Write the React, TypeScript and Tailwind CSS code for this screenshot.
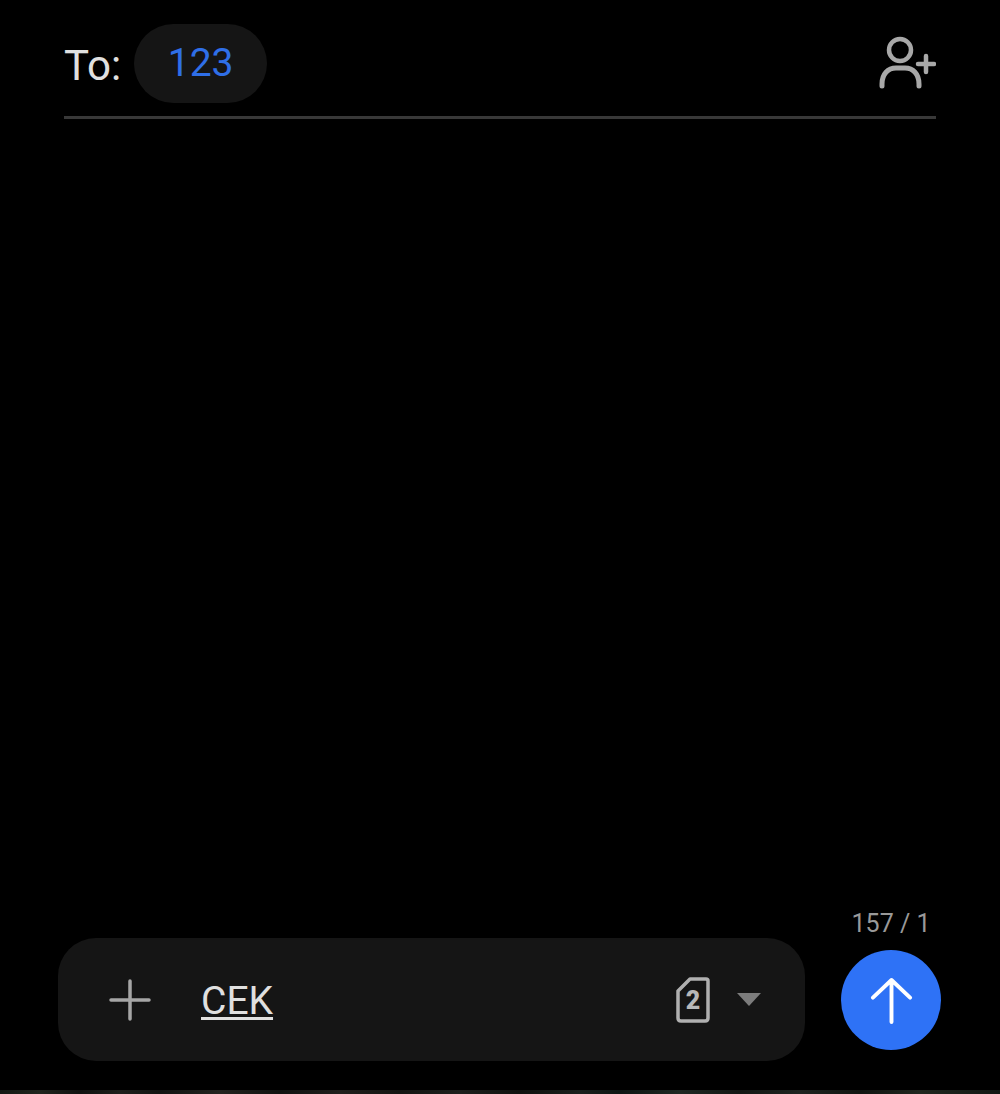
export default function App() {
  return (
    <div className="flex h-[1094px] w-[1000px] flex-col overflow-hidden bg-black font-['Roboto',sans-serif]">
      <header className="flex flex-col px-[64px] pt-[24px]">
        <div className="flex h-[79px] items-center">
          <span className="mt-[4px] text-[42px] leading-none text-[#e0e0e0]">To:</span>
          <div className="ml-[13px] flex h-[79px] w-[133px] items-center justify-center rounded-full bg-[#151515]">
            <span className="text-[39px] leading-none text-[#2f6fe8]">123</span>
          </div>
          <button className="ml-auto mt-[-2px] flex h-[60px] w-[60px] items-center justify-center">
            <svg viewBox="0 0 60 60" className="h-[60px] w-[60px]" fill="none" stroke="#a8a8a8" strokeLinecap="round">
              <circle cx="24" cy="17" r="11" strokeWidth="4.5" />
              <path d="M6 53 V51 C6 41 12 35 20 35 H29 C37 35 43 41 43 51 V53" strokeWidth="5" />
              <path d="M42 31 H58 M50 23 V39" strokeWidth="4.5" />
            </svg>
          </button>
        </div>
        <div className="mt-[13px] h-[3px] bg-[#383838]" />
      </header>

      <main className="flex-1" />

      <footer className="flex items-end pl-[58px] pr-[59px]">
        <div className="flex h-[123px] w-[747px] items-center rounded-[38px] bg-[#151515] pl-[51px] pr-[44px]">
          <svg viewBox="0 0 42 42" className="h-[42px] w-[42px]" fill="none" stroke="#a6a6a6" strokeWidth="3.5" strokeLinecap="round">
            <path d="M2 21 H40 M21 2 V40" />
          </svg>
          <span className="ml-[50px] mt-[4px] text-[39px] leading-none text-[#e0e0e0] underline underline-offset-[3px] decoration-[3px]">CEK</span>
          <svg viewBox="0 0 34 46" className="ml-auto h-[46px] w-[34px]" fill="none" stroke="#b0b0b0" strokeWidth="3.5" strokeLinejoin="round">
            <path d="M14 2 H30 Q32 2 32 4 V41 Q32 44 29 44 H5 Q2 44 2 41 V14 Z" />
            <text x="17" y="32" textAnchor="middle" fontFamily="Roboto, sans-serif" fontWeight="900" fontSize="25" fill="#b8b8b8" stroke="none">2</text>
          </svg>
          <svg viewBox="0 0 24 13" className="ml-[27px] h-[13px] w-[24px]" fill="#7c7c7c">
            <path d="M0 0 H24 L12 13 Z" />
          </svg>
        </div>
        <div className="ml-[36px] mb-[11px] flex w-[100px] flex-col items-center">
          <span className="mb-[14px] text-[25px] leading-none text-[#999999]">157 / 1</span>
          <button className="flex h-[100px] w-[100px] items-center justify-center rounded-full bg-[#2e72f6]">
            <svg viewBox="0 0 44 48" className="h-[47px] w-[43px]" fill="none" stroke="#ffffff" strokeWidth="4" strokeLinecap="round" strokeLinejoin="round">
              <path d="M22 46 V3 M3 21 L22 3 L41 21" />
            </svg>
          </button>
        </div>
      </footer>

      <div className="mt-[29px] h-[4px] bg-[linear-gradient(90deg,#141914,#20251e_4%,#101210_8%,#1e201c_12%,#121412_16%,#23231f_22%,#111311_28%,#201f1c_34%,#141512_40%,#1d201d_46%,#10120f_52%,#1a201d_58%,#0e1614_62%,#1f2823_68%,#131714_74%,#1e2420_80%,#111511_86%,#20271f_92%,#121714)]" />
    </div>
  );
}
